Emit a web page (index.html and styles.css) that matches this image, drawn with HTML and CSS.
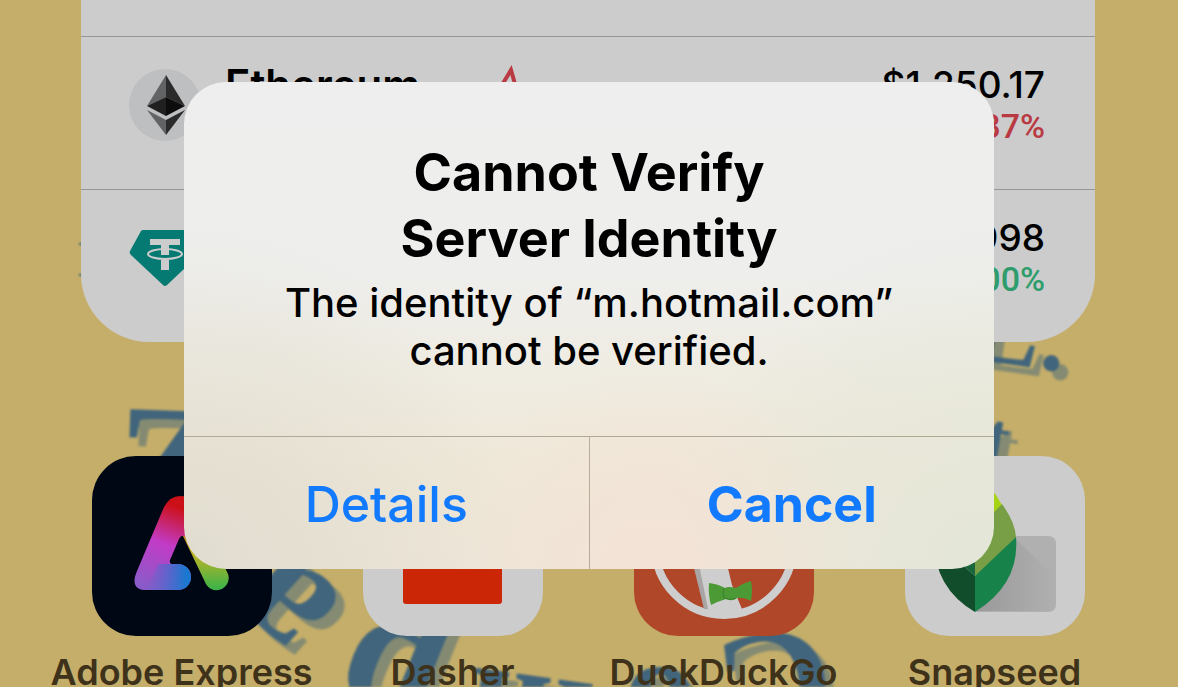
FILE: index.html
```html
<!DOCTYPE html>
<html lang="en">
<head>
    <meta charset="UTF-8">
    <meta name="viewport" content="width=device-width, initial-scale=1.0">
    <title>Home Screen</title>
    <link rel="stylesheet" href="styles.css">
</head>
<body>
    <!-- Wallpaper lettering -->
    <svg class="wallpaper" width="1178" height="687" viewBox="0 0 1178 687" aria-hidden="true">
        <defs>
            <g id="letters" text-anchor="middle">
                <text transform="translate(87 276) rotate(0)" font-size="50">I</text>
                <text transform="translate(170 522) rotate(2)" font-size="170">Z</text>
                <text transform="translate(316 572) rotate(222)" font-size="166">a</text>
                <text transform="translate(408 632) rotate(202)" font-size="176">p</text>
                <text transform="translate(535 676) rotate(188)" font-size="150">m</text>
                <text transform="translate(660 668) rotate(180)" font-size="150">o</text>
                <text transform="translate(768 634) rotate(172)" font-size="160">C</text>
                <text transform="translate(1000 363) rotate(8)" font-size="110">L</text>
                <text transform="translate(1050 370) rotate(10)" font-size="100">.</text>
                <text transform="translate(992 464) rotate(10)" font-size="76">t</text>
            </g>
        </defs>
        <use href="#letters" class="letters-shadow" x="9" y="9"/>
        <use href="#letters" class="letters"/>
    </svg>

    <main class="home">
        <ul class="widget">
            <li class="coin coin-cut"></li>
            <li class="coin">
                <svg class="coin-icon" viewBox="0 0 72 72" aria-hidden="true">
                    <circle cx="36" cy="36" r="36" fill="#bdbfc1"/>
                    <path d="M37 6L18 37l19-9z" fill="#626364"/>
                    <path d="M37 6l19 31-19-9z" fill="#2b2b2c"/>
                    <path d="M18 37l19-9v19z" fill="#202021"/>
                    <path d="M56 37l-19-9v19z" fill="#0d0d0e"/>
                    <path d="M18 41l19 10v15z" fill="#626364"/>
                    <path d="M56 41L37 51v15z" fill="#2b2b2c"/>
                </svg>
                <span class="coin-name">Ethereum</span>
                <svg class="spark" viewBox="0 0 200 80" aria-hidden="true">
                    <polyline points="0,66 30,48 41,30 56,5 62,26 74,50 110,42 150,62 196,56" fill="none" stroke="#b93a42" stroke-width="4"/>
                </svg>
                <div class="coin-value">
                    <div class="price">$1,250.17</div>
                    <div class="change down">-0.87%</div>
                </div>
            </li>
            <li class="coin">
                <svg class="coin-icon" viewBox="0 0 72 72" aria-hidden="true">
                    <path d="M14 8h44q2 0 3 2l11 18q1 2-1 4L38 63q-2 2-4 0L2 33q-2-2-1-4L12 9q1-1 2-1z" fill="#057a72"/>
                    <path d="M21 17h30v6H21zM32 22h8v11h-8zM32 38h8v10h-8z" fill="#ccc"/>
                    <ellipse cx="36" cy="32" rx="17" ry="5" fill="none" stroke="#ccc" stroke-width="2"/>
                </svg>
                <span class="coin-name">Tether</span>
                <div class="coin-value">
                    <div class="price">$0.9998</div>
                    <div class="change up">0.00%</div>
                </div>
            </li>
        </ul>

        <nav class="apps">
            <a class="app" href="#">
                <svg class="app-icon" viewBox="0 0 180 180" aria-hidden="true">
                    <defs>
                        <linearGradient id="ax-left" gradientUnits="userSpaceOnUse" x1="96" y1="55" x2="66" y2="135">
                            <stop offset="0" stop-color="#cc1018"/>
                            <stop offset=".45" stop-color="#c23bc6"/>
                            <stop offset="1" stop-color="#8a5bc8"/>
                        </linearGradient>
                        <linearGradient id="ax-foot" gradientUnits="userSpaceOnUse" x1="54" y1="122" x2="94" y2="122">
                            <stop offset="0" stop-color="#3275cf" stop-opacity="0"/>
                            <stop offset="1" stop-color="#1a78d0"/>
                        </linearGradient>
                        <linearGradient id="ax-right" x1="0" y1="0" x2="0" y2="1">
                            <stop offset="0" stop-color="#cc1018"/>
                            <stop offset=".6" stop-color="#c3b324"/>
                            <stop offset="1" stop-color="#37b44a"/>
                        </linearGradient>
                    </defs>
                    <rect width="180" height="180" fill="#000714"/>
                    <path d="M90 40q8 0 13 10l33 68a12 12 0 0 1-23 8L90 78z" fill="url(#ax-right)"/>
                    <path d="M88 40q-10 0-16 11L45 115c-7 16 2 19 9 19h32a13 13 0 0 0 0-26h-5q-4 0-3-4l9-21q2-4 5-3l8 3V50q-4-10-12-10z" fill="url(#ax-left)"/>
                    <path d="M54 134h32a13 13 0 0 0 0-26H66z" fill="url(#ax-foot)"/>
                </svg>
                <span class="app-label">Adobe Express</span>
            </a>
            <a class="app" href="#">
                <svg class="app-icon" viewBox="0 0 180 180" aria-hidden="true">
                    <rect width="180" height="180" fill="#ccc"/>
                    <rect x="40" y="42" width="99" height="106" rx="3" fill="#cb2706"/>
                </svg>
                <span class="app-label">Dasher</span>
            </a>
            <a class="app" href="#">
                <svg class="app-icon" viewBox="0 0 180 180" aria-hidden="true">
                    <rect width="180" height="180" fill="#b14729"/>
                    <circle cx="90" cy="90" r="69" fill="none" stroke="#cecece" stroke-width="8"/>
                    <path d="M60 100l12 57 38 1-12-29-7-29z" fill="#cecece"/>
                    <path d="M58 104l12 49h4L64 104z" fill="#a9a5a5"/>
                    <path d="M75 127q9 1 16 5 3-2 11 0 7-5 15-7 2 9 0 20-8-4-14-3-4 4-11 1-7 2-15 6-3-11-2-22z" fill="#4b9a36"/>
                    <path d="M90 132q-2 5 0 10 6 3 12 0" fill="none" stroke="#39802a" stroke-width="1"/>
                </svg>
                <span class="app-label">DuckDuckGo</span>
            </a>
            <a class="app" href="#">
                <svg class="app-icon" viewBox="0 0 180 180" aria-hidden="true">
                    <defs>
                        <linearGradient id="snap-shadow" x1="0" y1="0" x2="1" y2="0">
                            <stop offset="0" stop-color="#999"/>
                            <stop offset="1" stop-color="#b0b0b0"/>
                        </linearGradient>
                    </defs>
                    <rect width="180" height="180" fill="#ccc"/>
                    <path d="M70 80h73q8 0 8 8v60q0 8-8 8H70z" fill="#b0b0b0"/>
                    <path d="M110 82l40 39v27q0 7-7 7H70z" fill="url(#snap-shadow)"/>
                    <path d="M70 20q16 8 27 29L70 76z" fill="#a6d414"/>
                    <path d="M97 48q13 18 14 33l-41 41V75z" fill="#789f45"/>
                    <path d="M111 81q4 47-41 75v-36z" fill="#17834b"/>
                    <path d="M70 156Q29 132 29 84l41 36z" fill="#114d2b"/>
                    <path d="M40 84l30 16v20L40 94z" fill="#18663c"/>
                </svg>
                <span class="app-label">Snapseed</span>
            </a>
        </nav>
    </main>

    <div class="overlay">
        <div class="alert" role="alertdialog" aria-labelledby="alert-title" aria-describedby="alert-text">
            <div class="alert-body">
                <h1 id="alert-title">Cannot Verify<br>Server Identity</h1>
                <p id="alert-text">The identity of “m.hotmail.com”<br>cannot be verified.</p>
            </div>
            <div class="alert-actions">
                <button type="button">Details</button>
                <button type="button" class="primary">Cancel</button>
            </div>
        </div>
    </div>
</body>
</html>
```
FILE: styles.css
```css
* {
    box-sizing: border-box;
}
body {
    margin: 0;
    height: 100vh;
    overflow: hidden;
    position: relative;
    background: #c5ae6a;
    color: #000;
    font-family: Inter, "Liberation Sans", sans-serif;
}

/* wallpaper */
.wallpaper {
    position: absolute;
    top: 0;
    left: 0;
    font-family: "Liberation Serif", serif;
    font-weight: bold;
    filter: blur(1px);
}
.letters {
    fill: #41657c;
}
.letters-shadow {
    fill: #858b72;
}

.home {
    position: relative;
}

/* crypto widget */
.widget {
    list-style: none;
    margin: 0 83px 0 81px;
    padding: 0;
    background: #ccc;
    border-radius: 0 0 68px 68px;
}
.coin {
    display: flex;
    align-items: flex-start;
    height: 153px;
    padding: 28px 50px 0 48px;
    border-top: 1px solid #979797;
}
.coin-cut {
    height: 36px;
    padding: 0;
    border: 0;
}
.coin-icon {
    width: 72px;
    height: 72px;
    margin-top: 4px;
}
.coin-name {
    width: 220px;
    margin-left: 24px;
    font-size: 42px;
    font-weight: 600;
    line-height: 40px;
}
.spark {
    width: 200px;
    height: 80px;
    margin-left: 10px;
}
.coin-value {
    margin-left: auto;
    text-align: right;
}
.price {
    font-size: 37px;
    font-weight: 500;
    line-height: 40px;
}
.change {
    font-family: Roboto, "Liberation Sans", sans-serif;
    font-size: 34px;
    font-weight: 500;
    line-height: 42px;
}
.down {
    color: #b93a42;
}
.up {
    color: #2f9c6c;
}

/* app icons */
.apps {
    display: grid;
    grid-template-columns: repeat(4, 1fr);
    padding: 114px 48px 0 46px;
}
.app {
    display: flex;
    flex-direction: column;
    align-items: center;
    color: #3e321b;
    text-decoration: none;
}
.app-icon {
    width: 180px;
    height: 180px;
    border-radius: 44px;
}
.app-label {
    margin-top: 14px;
    font-size: 36px;
    font-weight: 600;
    line-height: 44px;
    white-space: nowrap;
}

/* alert */
.overlay {
    position: absolute;
    inset: 0;
    display: flex;
    align-items: center;
    justify-content: center;
    padding-bottom: 36px;
}
.alert {
    width: 810px;
    overflow: hidden;
    border-radius: 42px;
    background:
        radial-gradient(circle at 58% 100%, #f4e3d6 0, rgba(244, 227, 214, 0) 30%),
        radial-gradient(circle at 0 100%, #e0dccf 0, rgba(224, 220, 207, 0) 36%),
        radial-gradient(circle at 100% 100%, #e3e6d8 0, rgba(227, 230, 216, 0) 36%),
        linear-gradient(#eee 0, #eeeeec 40%, #efebdf 65%, #efe8d8 80%, #eee6d8 100%);
}
.alert-body {
    padding: 58px 40px 61px;
    text-align: center;
}
.alert h1 {
    margin: 0;
    font-size: 52px;
    font-weight: 700;
    line-height: 66px;
}
.alert p {
    margin: 7px 0 0;
    font-size: 40px;
    font-weight: 500;
    line-height: 48px;
}
.alert-actions {
    display: flex;
    border-top: 1px solid #b0a995;
}
.alert button {
    flex: 1;
    height: 132px;
    padding: 2px 0 0;
    border: 0;
    background: none;
    color: #127aff;
    font-family: inherit;
    font-size: 50px;
    font-weight: 500;
    cursor: pointer;
}
.alert button + button {
    border-left: 1px solid #b8ab9b;
}
.alert .primary {
    font-weight: 700;
}
```
